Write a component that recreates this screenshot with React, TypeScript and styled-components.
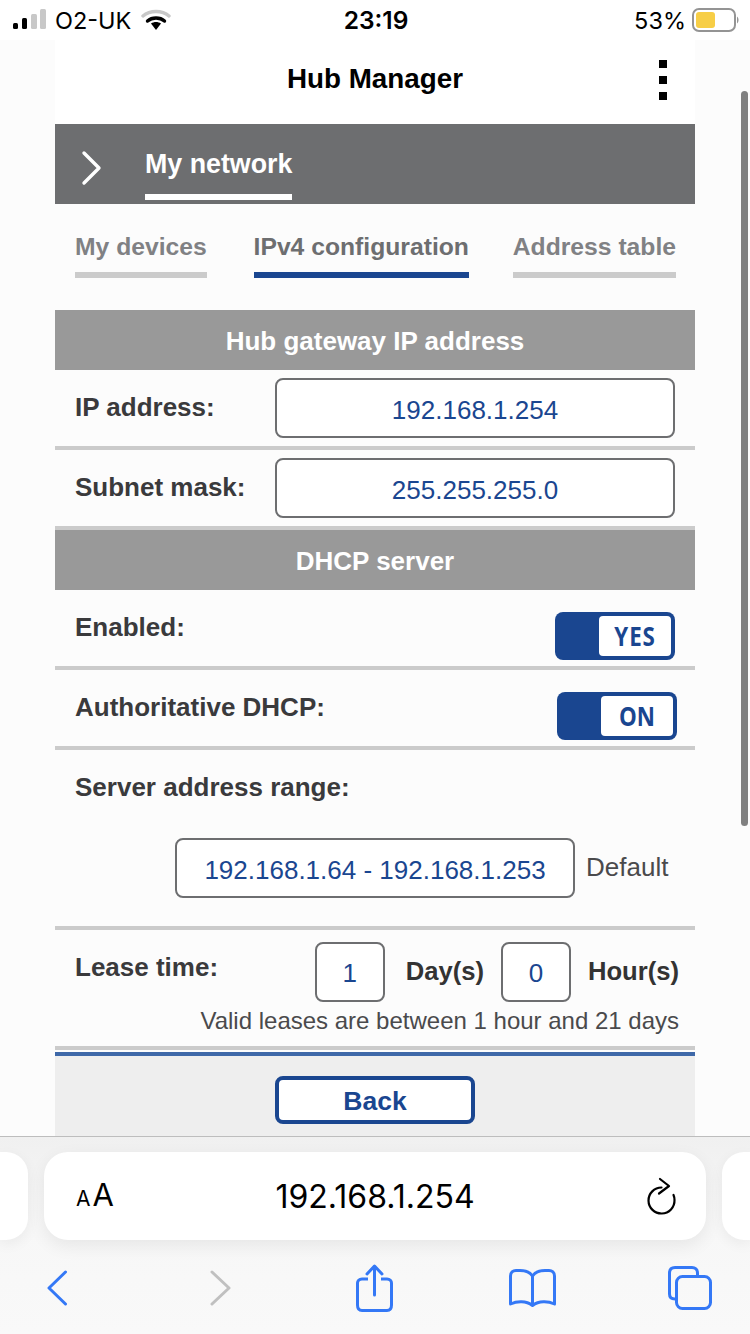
import React from 'react';
import styled, { createGlobalStyle } from 'styled-components';

const Blue = '#1a4690';
const Line = '#cbcbcb';

const GlobalStyle = createGlobalStyle`
  html, body {
    margin: 0;
    padding: 0;
    background: #fcfcfc;
    font-family: "Liberation Sans", Arial, sans-serif;
  }
`;

const Screen = styled.div`
  position: relative;
  width: 750px;
  height: 1334px;
  overflow: hidden;
  display: flex;
  flex-direction: column;
  background: #fcfcfc;
`;

const StatusBar = styled.div`
  height: 40px;
  background: #fff;
  display: grid;
  grid-template-columns: 1fr auto 1fr;
  align-items: center;
  padding: 0 11px 0 13px;
  color: #000;
  flex: none;
`;

const StatusLeft = styled.div`
  display: flex;
  align-items: center;
`;

const SignalBars = styled.svg`
  margin-top: -2px;
`;

const Carrier = styled.span`
  font-family: Inter, "Liberation Sans", sans-serif;
  font-size: 23.5px;
  margin: 0 10px 0 9px;
`;

const Clock = styled.span`
  font-family: Inter, "Liberation Sans", sans-serif;
  font-size: 24.5px;
  font-weight: 600;
`;

const StatusRight = styled.div`
  display: flex;
  align-items: center;
  justify-content: flex-end;
  gap: 6px;
`;

const Percent = styled.span`
  font-family: Inter, "Liberation Sans", sans-serif;
  font-size: 23.5px;
`;

const Page = styled.main`
  width: 640px;
  margin-left: 55px;
  flex: none;
`;

const Header = styled.header`
  height: 84px;
  background: #fff;
  position: relative;
  display: flex;
  align-items: center;
  justify-content: center;
`;

const HeaderTitle = styled.h1`
  margin: 0 0 6px;
  font-size: 27.8px;
  font-weight: 700;
  color: #000;
`;

const Kebab = styled.div`
  position: absolute;
  right: 28px;
  top: 20px;
  display: flex;
  flex-direction: column;
  gap: 8px;
`;

const KebabDot = styled.span`
  width: 8px;
  height: 8px;
  background: #000;
`;

const NavBar = styled.nav`
  height: 80px;
  background: #6d6e70;
  display: flex;
  align-items: flex-start;
  padding-left: 26px;
`;

const NavIcon = styled.svg`
  width: 22px;
  height: 36px;
  margin-top: 26px;
  margin-right: 42px;
`;

const NavCurrent = styled.div`
  height: 76px;
  box-sizing: border-box;
  padding-top: 21px;
  border-bottom: 6px solid #fff;
  color: #fff;
  font-size: 26.8px;
  font-weight: 700;
  line-height: 38px;
`;

const Tabs = styled.div`
  display: flex;
  justify-content: space-between;
  padding: 24px 19px 0 20px;
  height: 106px;
  box-sizing: border-box;
`;

const Tab = styled.div<{ $active?: boolean }>`
  height: 50px;
  box-sizing: border-box;
  border-bottom: 6px solid ${(p) => (p.$active ? Blue : Line)};
  color: ${(p) => (p.$active ? '#6d6e70' : '#808184')};
  font-size: 24.7px;
  font-weight: 700;
  line-height: 38px;
  white-space: nowrap;
  margin-left: ${(p) => (p.$active ? 3 : 0)}px;
`;

const SectionTitle = styled.h2`
  margin: 0;
  height: 60px;
  background: #999;
  color: #fff;
  font-size: 26px;
  font-weight: 700;
  line-height: 62px;
  text-align: center;
`;

const Row = styled.div`
  height: 76px;
  border-bottom: 4px solid ${Line};
  display: flex;
  align-items: center;
  justify-content: space-between;
  padding: 0 20px;
`;

const RowLabel = styled.label`
  color: #3a3a3c;
  font-size: 26px;
  font-weight: 700;
  margin-bottom: 2px;
`;

const ToggleLabel = styled(RowLabel)`
  margin-bottom: 1px;
`;

const Field = styled.div<{ $width?: number }>`
  width: ${(p) => p.$width ?? 400}px;
  height: 60px;
  box-sizing: border-box;
  border: 2px solid #6d6e70;
  border-radius: 8px;
  background: #fff;
  color: ${Blue};
  font-size: 26px;
  line-height: 60px;
  text-align: center;
  flex: none;
`;

const Switch = styled.div<{ $nudge?: number }>`
  width: 120px;
  height: 48px;
  box-sizing: border-box;
  background: ${Blue};
  border-radius: 8px;
  padding: 4px;
  display: flex;
  justify-content: flex-end;
  margin-right: ${(p) => p.$nudge ?? 0}px;
  margin-top: 16px;
`;

const SwitchFace = styled.div`
  width: 72px;
  background: #fff;
  border-radius: 4px;
  color: ${Blue};
  font-family: "Open Sans", sans-serif;
  font-size: 26px;
  font-weight: 700;
  line-height: 40px;
  text-align: center;
`;

const SwitchText = styled.span<{ $spread?: number }>`
  display: inline-block;
  letter-spacing: ${(p) => p.$spread ?? 0}px;
  transform: scale(0.86, 1.02);
`;

const RangeBlock = styled.div`
  height: 176px;
  border-bottom: 4px solid ${Line};
  padding: 0 20px;
`;

const RangeLabel = styled(RowLabel)`
  display: block;
  line-height: 30px;
  padding-top: 22px;
  margin-bottom: 0;
`;

const RangeRow = styled.div`
  display: flex;
  align-items: center;
  margin: 36px 0 0 100px;
`;

const DefaultNote = styled.span`
  margin: 0 0 2px 11px;
  color: #4a4a4c;
  font-size: 26px;
  white-space: nowrap;
`;

const LeaseBlock = styled.div`
  border-bottom: 4px solid ${Line};
  padding: 12px 16px 0 20px;
  box-sizing: border-box;
  height: 120px;
`;

const LeaseRow = styled.div`
  display: flex;
  align-items: center;
  height: 60px;
`;

const LeaseLabel = styled(RowLabel)`
  flex: 1;
  margin-bottom: 10px;
`;

const SmallField = styled(Field)`
  width: 70px;
  line-height: 58px;
`;

const Unit = styled.span<{ $before: number; $after: number }>`
  margin: 0 ${(p) => p.$after}px 2px ${(p) => p.$before}px;
  color: #333;
  font-size: 25.6px;
  font-weight: 700;
`;

const LeaseHint = styled.div`
  color: #4a4a4c;
  font-size: 24px;
  text-align: right;
  line-height: 34px;
  margin-top: 2px;
  white-space: nowrap;
`;

const Footer = styled.div`
  margin-top: 2px;
  border-top: 4px solid #3e68a8;
  background: #eee;
  height: 100px;
  display: flex;
  justify-content: center;
  padding-top: 20px;
  box-sizing: border-box;
`;

const BackButton = styled.button`
  width: 200px;
  height: 48px;
  box-sizing: border-box;
  border: 4px solid ${Blue};
  border-radius: 8px;
  background: #fff;
  color: ${Blue};
  font-family: inherit;
  font-size: 26.5px;
  font-weight: 700;
  padding: 2px 0 0;
`;

const Scrollbar = styled.div`
  position: absolute;
  right: 2px;
  top: 91px;
  width: 7px;
  height: 735px;
  border-radius: 4px;
  background: #808080;
`;

const Browser = styled.div`
  position: absolute;
  left: 0;
  right: 0;
  bottom: 0;
  height: 198px;
  border-top: 1px solid #bdbdbd;
  background: linear-gradient(#f0f0f0, #f7f7f7 45%, #f9f9f9);
  box-sizing: border-box;
  display: flex;
  flex-direction: column;
`;

const AddressLine = styled.div`
  display: grid;
  grid-template-columns: 28px 662px 28px;
  justify-content: space-between;
  margin-top: 15px;
`;

const SideTab = styled.div<{ $side: 'left' | 'right' }>`
  height: 88px;
  background: #fff;
  border-radius: ${(p) => (p.$side === 'left' ? '0 22px 22px 0' : '22px 0 0 22px')};
  box-shadow: 0 4px 14px rgba(0, 0, 0, 0.06);
`;

const AddressPill = styled.div`
  height: 88px;
  background: #fff;
  border-radius: 24px;
  box-shadow: 0 6px 18px rgba(0, 0, 0, 0.07);
  display: grid;
  grid-template-columns: 100px 1fr 100px;
  align-items: center;
`;

const TextSize = styled.span`
  padding-left: 32px;
  color: #000;
  font-size: 31px;
  line-height: 40px;
  font-family: Inter, sans-serif;
  white-space: nowrap;
  margin-top: 2px;
`;

const SmallA = styled.span`
  font-size: 21px;
  margin-right: 2px;
`;

const Url = styled.span`
  color: #000;
  font-size: 32px;
  text-align: center;
  font-family: Inter, "Liberation Sans", sans-serif;
`;

const Reload = styled.svg`
  width: 30px;
  height: 36px;
  justify-self: end;
  margin-right: 29px;
  overflow: visible;
`;

const ToolBar = styled.div`
  display: grid;
  grid-template-columns: 163px 146px 153px 159px 46px;
  align-items: center;
  padding-left: 47px;
  margin-top: 24px;
`;

const ToolIcon = styled.svg`
  display: block;
  overflow: visible;
`;

const App = () => (
  <Screen>
    <GlobalStyle />
    <StatusBar>
      <StatusLeft>
        <SignalBars width="33" height="20" viewBox="0 0 33 20">
          <rect x="0" y="14" width="5" height="6" rx="1.5" fill="#000" />
          <rect x="9" y="9" width="5" height="11" rx="1.5" fill="#000" />
          <rect x="18" y="5" width="6" height="15" rx="1.5" fill="#c8c8c8" />
          <rect x="27" y="0" width="6" height="20" rx="1.5" fill="#c8c8c8" />
        </SignalBars>
        <Carrier>O2-UK</Carrier>
        <svg width="30" height="22" viewBox="0 0 30 22">
          <path d="M2 7 C9 1 21 1 28 7" fill="none" stroke="#c8c8c8" strokeWidth="3.4" strokeLinecap="round" />
          <path d="M6.5 12 C11 8 19 8 23.5 12" fill="none" stroke="#000" strokeWidth="3.4" strokeLinecap="round" />
          <path d="M10 14.5 L15 21 L20 14.5 C17 12.5 13 12.5 10 14.5 Z" fill="#000" />
        </svg>
      </StatusLeft>
      <Clock>23:19</Clock>
      <StatusRight>
        <Percent>53%</Percent>
        <svg width="47" height="24" viewBox="0 0 47 24">
          <rect x="1" y="1" width="42" height="22" rx="6" fill="none" stroke="#949494" strokeWidth="2" />
          <rect x="4" y="4" width="19" height="16" rx="3" fill="#f7ce46" />
          <path d="M45 8.5 C47 10 47 14 45 15.5 Z" fill="#949494" />
        </svg>
      </StatusRight>
    </StatusBar>

    <Page>
      <Header>
        <HeaderTitle>Hub Manager</HeaderTitle>
        <Kebab>
          <KebabDot />
          <KebabDot />
          <KebabDot />
        </Kebab>
      </Header>
      <NavBar>
        <NavIcon viewBox="0 0 22 36">
          <path d="M3 3 L18 18 L3 33" fill="none" stroke="#fff" strokeWidth="3.4" strokeLinecap="round" strokeLinejoin="round" />
        </NavIcon>
        <NavCurrent>My network</NavCurrent>
      </NavBar>
      <Tabs>
        <Tab>My devices</Tab>
        <Tab $active>IPv4 configuration</Tab>
        <Tab>Address table</Tab>
      </Tabs>

      <SectionTitle>Hub gateway IP address</SectionTitle>
      <Row>
        <RowLabel>IP address:</RowLabel>
        <Field>192.168.1.254</Field>
      </Row>
      <Row>
        <RowLabel>Subnet mask:</RowLabel>
        <Field>255.255.255.0</Field>
      </Row>

      <SectionTitle>DHCP server</SectionTitle>
      <Row>
        <ToggleLabel>Enabled:</ToggleLabel>
        <Switch>
          <SwitchFace>
            <SwitchText $spread={1}>YES</SwitchText>
          </SwitchFace>
        </Switch>
      </Row>
      <Row>
        <ToggleLabel>Authoritative DHCP:</ToggleLabel>
        <Switch $nudge={-2}>
          <SwitchFace>
            <SwitchText>ON</SwitchText>
          </SwitchFace>
        </Switch>
      </Row>
      <RangeBlock>
        <RangeLabel>Server address range:</RangeLabel>
        <RangeRow>
          <Field>192.168.1.64 - 192.168.1.253</Field>
          <DefaultNote>Default</DefaultNote>
        </RangeRow>
      </RangeBlock>
      <LeaseBlock>
        <LeaseRow>
          <LeaseLabel>Lease time:</LeaseLabel>
          <SmallField>1</SmallField>
          <Unit $before={21} $after={17}>Day(s)</Unit>
          <SmallField>0</SmallField>
          <Unit $before={17} $after={0}>Hour(s)</Unit>
        </LeaseRow>
        <LeaseHint>Valid leases are between 1 hour and 21 days</LeaseHint>
      </LeaseBlock>
      <Footer>
        <BackButton>Back</BackButton>
      </Footer>
    </Page>

    <Scrollbar />

    <Browser>
      <AddressLine>
        <SideTab $side="left" />
        <AddressPill>
          <TextSize>
            <SmallA>A</SmallA>A
          </TextSize>
          <Url>192.168.1.254</Url>
          <Reload viewBox="0 0 30 36">
            <path d="M14.5 9.5 A13 13 0 1 0 27.5 22 C27.5 20 27.2 18.5 26.5 17" fill="none" stroke="#000" strokeWidth="2.2" strokeLinecap="round" />
            <path d="M13 1 L22 8 L12 15.5" fill="none" stroke="#000" strokeWidth="2.2" strokeLinecap="round" strokeLinejoin="round" />
          </Reload>
        </AddressPill>
        <SideTab $side="right" />
      </AddressLine>
      <ToolBar>
        <ToolIcon width="20" height="36" viewBox="0 0 20 36">
          <path d="M18.5 2 L2 18 L18.5 34" fill="none" stroke="#3478f6" strokeWidth="3" strokeLinecap="round" strokeLinejoin="round" />
        </ToolIcon>
        <ToolIcon width="21" height="36" viewBox="0 0 21 36">
          <path d="M2 2 L19 18 L2 34" fill="none" stroke="#c0c0c0" strokeWidth="3" strokeLinecap="round" strokeLinejoin="round" />
        </ToolIcon>
        <ToolIcon width="37" height="48" viewBox="0 0 37 48">
          <path d="M12 15 H6 C3 15 1.5 17 1.5 19 V41 C1.5 44.5 3 46.5 6 46.5 H31 C34 46.5 35.5 44.5 35.5 41 V19 C35.5 17 34 15 31 15 H25" fill="none" stroke="#3478f6" strokeWidth="3" />
          <path d="M18.5 31 V3 M11 10 L18.5 2 L26 10" fill="none" stroke="#3478f6" strokeWidth="3" strokeLinecap="round" strokeLinejoin="round" />
        </ToolIcon>
        <ToolIcon width="47" height="38" viewBox="0 0 47 38">
          <path d="M23.5 7 C21 3 17 1.5 11 1.5 H7 C4 1.5 1.5 3.5 1.5 7 V35 C8 32 17 31.5 23.5 36.5 C30 31.5 39 32 45.5 35 V7 C45.5 3.5 43 1.5 40 1.5 H36 C30 1.5 26 3 23.5 7 Z M23.5 7 V36" fill="none" stroke="#3478f6" strokeWidth="3" strokeLinejoin="round" />
        </ToolIcon>
        <ToolIcon width="44" height="44" viewBox="0 0 44 44">
          <path d="M8 33 H7 C3.5 33 1.5 31 1.5 28 V7 C1.5 3.5 3.5 1.5 7 1.5 H24 C27 1.5 29.5 3.5 29.5 7 V10" fill="none" stroke="#3478f6" strokeWidth="3" />
          <rect x="8.5" y="10.5" width="34" height="32" rx="6" fill="none" stroke="#3478f6" strokeWidth="3" />
        </ToolIcon>
      </ToolBar>
    </Browser>
  </Screen>
);

export default App;
